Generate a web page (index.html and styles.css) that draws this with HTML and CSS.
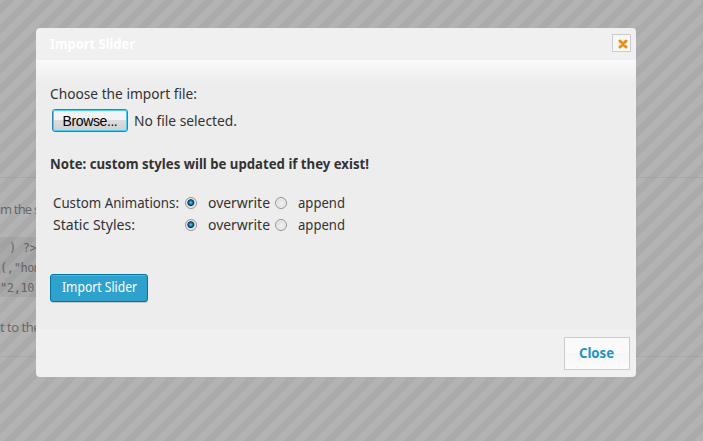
FILE: index.html
```html
<!DOCTYPE html>
<html lang="en">
<head>
<meta charset="utf-8">
<title>Import Slider</title>
<link rel="stylesheet" href="styles.css">
</head>
<body>
<main class="page">
  <section class="panel">
    <p class="hint before">m the s</p>
    <pre class="code"><code>) ?&gt;
(,"hom
"2,10"</code></pre>
    <p class="hint after">t to the</p>
  </section>
</main>
<div class="overlay"></div>
<div class="dialog" role="dialog" aria-label="Import Slider">
  <header class="titlebar">
    <h1><svg class="label" width="100" height="20"><text x="0" y="15" textLength="85" lengthAdjust="spacingAndGlyphs">Import Slider</text></svg></h1>
    <button class="dismiss" aria-label="Close">
      <svg width="10" height="10" viewBox="0 0 10 10"><path d="M2 2L8 8M8 2L2 8"/></svg>
    </button>
  </header>
  <div class="content">
    <svg class="label" width="200" height="20"><text x="0" y="15" textLength="147" lengthAdjust="spacingAndGlyphs">Choose the import file:</text></svg>
    <div class="file">
      <button class="browse">Browse...</button>
      <svg class="label" width="140" height="20"><text x="0" y="15" textLength="103" lengthAdjust="spacingAndGlyphs">No file selected.</text></svg>
    </div>
    <svg class="label note" width="340" height="20"><text x="0" y="15" textLength="319" lengthAdjust="spacingAndGlyphs">Note: custom styles will be updated if they exist!</text></svg>
    <div class="options">
      <svg class="label" width="132" height="22"><text x="0" y="16" textLength="126" lengthAdjust="spacingAndGlyphs">Custom Animations:</text></svg>
      <i class="radio on"></i>
      <svg class="label" width="67" height="22"><text x="0" y="16" textLength="62" lengthAdjust="spacingAndGlyphs">overwrite</text></svg>
      <i class="radio"></i>
      <svg class="label" width="60" height="22"><text x="0" y="16" textLength="47" lengthAdjust="spacingAndGlyphs">append</text></svg>
      <svg class="label" width="132" height="22"><text x="0" y="16" textLength="82" lengthAdjust="spacingAndGlyphs">Static Styles:</text></svg>
      <i class="radio on"></i>
      <svg class="label" width="67" height="22"><text x="0" y="16" textLength="62" lengthAdjust="spacingAndGlyphs">overwrite</text></svg>
      <i class="radio"></i>
      <svg class="label" width="60" height="22"><text x="0" y="16" textLength="47" lengthAdjust="spacingAndGlyphs">append</text></svg>
    </div>
    <button class="import"><svg class="label" width="76" height="20"><text x="0" y="14" textLength="75" lengthAdjust="spacingAndGlyphs">Import Slider</text></svg></button>
  </div>
  <footer class="actions">
    <button class="close"><svg class="label" width="35" height="20"><text x="0" y="15" textLength="35" lengthAdjust="spacingAndGlyphs">Close</text></svg></button>
  </footer>
</div>
</body>
</html>
```
FILE: styles.css
```css
* { box-sizing: border-box; }
body { margin: 0; height: 441px; overflow: hidden; background: #b3b3b3; font-family: "Open Sans", sans-serif; }
button { padding: 0; margin: 0; }
.page { padding-top: 177px; }
.panel { height: 180px; border: solid #a9a9a9; border-width: 1px 0; padding-top: 21px; }
.hint { margin: 0; font-size: 13px; line-height: 20px; letter-spacing: -.45px; color: #666; white-space: nowrap; }
.before { letter-spacing: -.8px; }
.code { margin: 18px 0 0; width: 60px; height: 60px; background: #a9a9a9; font: 12px/20px "DejaVu Sans Mono", monospace; letter-spacing: -.4px; text-indent: 9px; color: #666; overflow: hidden; padding-top: 1px; }
.code code { font: inherit; }
.after { margin-top: 20px; }
.overlay {
  position: absolute; inset: 0;
  background: linear-gradient(135deg, rgba(0,0,0,.045) 25%, transparent 25%, transparent 50%, rgba(0,0,0,.045) 50%, rgba(0,0,0,.045) 75%, transparent 75%) 5px 0 / 20px 20px;
}
.dialog {
  position: absolute; left: 36px; top: 28px; width: 600px; height: 349px;
  display: flex; flex-direction: column;
  background: #f0f0f0; border-radius: 4px; overflow: hidden;
}
.label { display: block; font-family: "Trebuchet MS", "Noto Sans", sans-serif; font-size: 13.5px; fill: #333; overflow: visible; }
.titlebar { height: 32px; padding: 0 5px 0 14px; display: flex; justify-content: space-between; }
.titlebar h1 { margin: 6px 0 0; }
.titlebar .label { fill: #fff; font-weight: bold; }
.dismiss { width: 19px; height: 18px; margin-top: 6px; border: 1px solid #ccc; background: #f7f7f7; display: flex; align-items: center; justify-content: center; padding: 2px 0 0 2px; }
.dismiss path { stroke: #ec8e0c; stroke-width: 3; stroke-linecap: round; }
.content { height: 269px; padding: 24px 14px 0; background: linear-gradient(#f9f9f9, #ededed 24px); }
.file { display: flex; height: 24px; margin: 5px 0 0 2px; gap: 6px; }
.browse { width: 76px; height: 23px; border: 1px solid #2c84b5; border-radius: 3px; box-shadow: inset 0 0 0 1px #46d0f6; background: linear-gradient(#f3f3f3 50%, #dcdcdc 50%, #d0d0d0); font: 14px "Liberation Sans", sans-serif; letter-spacing: -.4px; color: #000; }
.file .label { margin-top: 2px; }
.note { font-weight: bold; margin-top: 21px; }
.options { display: grid; grid-template-columns: 132px 23px 67px 23px 60px; grid-auto-rows: 22px; margin: 18px 0 0 3px; }
.radio { width: 12px; height: 12px; margin-top: 5px; border: 1px solid #929292; border-radius: 50%; background: radial-gradient(circle at 55% 55%, #f4f4f4, #ccc); box-shadow: inset 0 0 0 1px #f6f6f6; }
.radio.on { background: radial-gradient(circle at 48% 46%, #69d5ff 0, #1683bd 1.5px, #0b3653 3px, #ddd 4px); }
.import { display: block; width: 98px; height: 28px; margin-top: 38px; padding-left: 11px; border: 1px solid #0074a2; border-radius: 3px; background: #2ea2cc; box-shadow: inset 0 1px 0 rgba(120,200,230,.5), 0 1px 0 rgba(0,0,0,.15); }
.import .label { fill: #fff; }
.actions { height: 48px; padding: 8px 6px; display: flex; justify-content: flex-end; }
.close { width: 66px; height: 33px; border: 1px solid #ccc; background: linear-gradient(#fafafa 50%, #f6f6f6 50%, #fcfcfc); padding: 0 0 2px 14px; }
.close .label { fill: #1c94c4; font-weight: bold; }
```
